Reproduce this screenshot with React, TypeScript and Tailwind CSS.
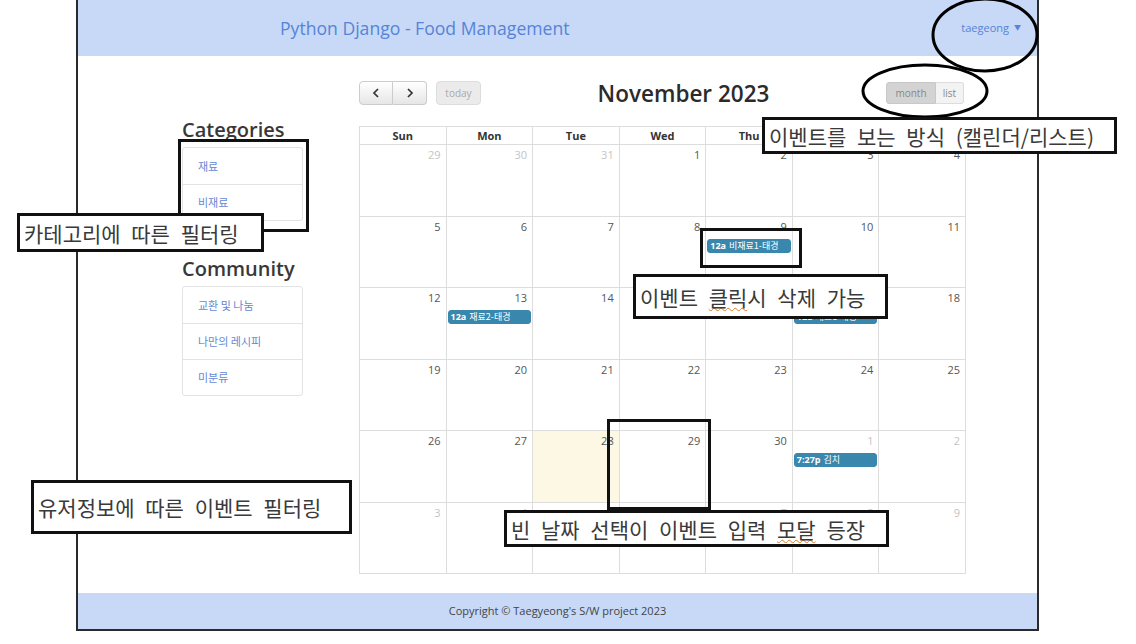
// App.tsx
import React from "react";

interface CalEvent {
  time: string;
  title: string;
}

interface Day {
  n: number;
  other?: boolean;
  today?: boolean;
  ev?: CalEvent;
}

const ko = { fontFamily: '"Noto Sans CJK KR", "Noto Sans", sans-serif' };
const sans = { fontFamily: '"Open Sans", "Noto Sans CJK KR", sans-serif' };

const buildDays = (): Day[] => {
  const days: Day[] = [{ n: 29, other: true }, { n: 30, other: true }, { n: 31, other: true }];
  for (let i = 1; i <= 30; i++) days.push({ n: i, today: i === 28 });
  for (let i = 1; i <= 9; i++) days.push({ n: i, other: true });
  days[3 + 8].ev = { time: "12a", title: "비재료1-태경" };
  days[3 + 12].ev = { time: "12a", title: "재료2-태경" };
  days[3 + 16].ev = { time: "12a", title: "재료1-태경" };
  days[33].ev = { time: "7:27p", title: "김치" };
  return days;
};

const Chevron = ({ dir }: { dir: "l" | "r" }) => (
  <svg width="8" height="10" viewBox="0 0 8 10">
    <polyline
      points={dir === "l" ? "6,1 2,5 6,9" : "2,1 6,5 2,9"}
      fill="none"
      stroke="#333"
      strokeWidth="1.7"
    />
  </svg>
);

const SideList = ({ title, items, mt }: { title: string; items: string[]; mt: string }) => (
  <div className={mt}>
    <h3 className="text-[20px] leading-[24px] font-semibold text-[#383838] mb-[5px]" style={sans}>
      {title}
    </h3>
    <div className="border border-[#e3e3e3] rounded-[3px]">
      {items.map((item, i) => (
        <div
          key={item}
          className={`h-[36px] flex items-center pl-[15px] text-[11px] text-[#6688d4] ${i > 0 ? "border-t border-[#e3e3e3]" : ""}`}
          style={ko}
        >
          {item}
        </div>
      ))}
    </div>
  </div>
);

const Calendar = () => {
  const days = buildDays();
  const names = ["Sun", "Mon", "Tue", "Wed", "Thu", "Fri", "Sat"];

  return (
    <div className="w-[607px] pt-[25px]" style={sans}>
      <div className="flex items-center h-[24px] mb-[21px]">
        <div className="flex items-center">
          <div className="flex">
            <button className="w-[34px] h-[24px] flex items-center justify-center border border-[#ccc] rounded-l-[4px] bg-linear-to-b from-white to-[#e6e6e6]">
              <Chevron dir="l" />
            </button>
            <button className="w-[34px] h-[24px] flex items-center justify-center border border-l-0 border-[#ccc] rounded-r-[4px] bg-linear-to-b from-white to-[#e6e6e6]">
              <Chevron dir="r" />
            </button>
          </div>
          <button className="ml-[9px] w-[45px] h-[24px] border border-[#ddd] rounded-[4px] bg-[#ebebeb] text-[10px] text-[#aaa]">
            today
          </button>
        </div>
        <h2 className="flex-1 text-center text-[22.5px] leading-[24px] font-semibold text-[#2b2b2b] pt-[2px]">
          November 2023
        </h2>
        <div className="flex mr-[2px]">
          <button className="w-[50px] h-[22px] border border-[#c8c8c8] rounded-l-[3px] bg-[#d3d3d3] text-[10px] text-[#888]">
            month
          </button>
          <button className="w-[28px] h-[22px] border border-l-0 border-[#ddd] rounded-r-[3px] bg-[#f3f3f3] text-[10px] text-[#888]">
            list
          </button>
        </div>
      </div>

      <div className="border-l border-t border-[#ddd]">
        <div className="grid grid-cols-7">
          {names.map((n) => (
            <div
              key={n}
              className="h-[18px] border-r border-b border-[#ddd] text-center text-[11px] leading-[17px] font-bold text-[#333]"
            >
              {n}
            </div>
          ))}
        </div>
        <div className="grid grid-cols-7">
          {days.map((d, i) => (
            <div
              key={i}
              className={`h-[71.5px] border-r border-b border-[#ddd] ${d.today ? "bg-[#fcf8e3]" : ""}`}
            >
              <div
                className={`text-right pr-[5px] pt-[3px] text-[11px] leading-[14px] ${d.other ? "text-[#c4c4c4]" : "text-[#555]"}`}
              >
                {d.n}
              </div>
              {d.ev && (
                <div
                  className="mx-[1px] mt-[5px] h-[14px] rounded-[3px] bg-[#3a87ad] border border-[#3a87ad] px-[2px] text-[9px] leading-[12px] text-white whitespace-nowrap overflow-hidden"
                  style={ko}
                >
                  <span className="font-bold mr-[3px]" style={sans}>
                    {d.ev.time}
                  </span>
                  {d.ev.title}
                </div>
              )}
            </div>
          ))}
        </div>
      </div>
    </div>
  );
};

const Label = ({ pos, children }: { pos: string; children: React.ReactNode }) => (
  <div
    className={`absolute ${pos} bg-white border-[3px] border-[#111] flex items-center pl-[4px] text-[21px] leading-[26px] text-[#3a3a3a] whitespace-nowrap [word-spacing:6px]`}
    style={ko}
  >
    <span>{children}</span>
  </div>
);

const Squiggle = ({ children }: { children: React.ReactNode }) => (
  <span className="underline decoration-wavy decoration-[#e07b20] decoration-1 underline-offset-[1px]">
    {children}
  </span>
);

const App: React.FC = () => {
  return (
    <div className="relative w-[1136px] h-[644px] overflow-hidden bg-white">
      <div className="ml-[76px] w-[963px] h-[631px] border-x-2 border-b-2 border-[#2a2a2a] flex flex-col">
        <header className="h-[56px] bg-[#c7d9f7] flex items-center pl-[202px] pr-[16px]" style={sans}>
          <h1 className="text-[17.6px] text-[#5684d6]">Python Django - Food Management</h1>
          <div className="ml-auto flex items-center text-[11px] text-[#5684d6]">
            taegeong
            <span className="ml-[5px] text-[7px]">▼</span>
          </div>
        </header>

        <main className="flex-1 flex">
          <aside className="ml-[104px] w-[121px] pt-[62px]">
            <SideList title="Categories" items={["재료", "비재료"]} mt="" />
            <SideList title="Community" items={["교환 및 나눔", "나만의 레시피", "미분류"]} mt="mt-[36px]" />
          </aside>
          <div className="ml-[56px]">
            <Calendar />
          </div>
        </main>

        <footer className="h-[36px] bg-[#c7d9f7] flex items-center justify-center text-[11px] text-[#444]" style={sans}>
          Copyright © Taegyeong's S/W project 2023
        </footer>
      </div>

      {/* annotation overlays */}
      <svg className="absolute left-[930px] top-[-4px]" width="110" height="80">
        <ellipse cx="55" cy="39" rx="52" ry="36" fill="none" stroke="#000" strokeWidth="3" />
      </svg>
      <svg className="absolute left-[860px] top-[63px]" width="130" height="56">
        <ellipse cx="65" cy="28" rx="62" ry="26" fill="none" stroke="#000" strokeWidth="3" />
      </svg>

      <div className="absolute left-[178px] top-[139px] w-[131px] h-[93px] border-[3px] border-[#111]" />
      <div className="absolute left-[700px] top-[228px] w-[102px] h-[40px] border-[3px] border-[#111]" />
      <div className="absolute left-[607px] top-[419px] w-[104px] h-[91px] border-[3px] border-[#111]" />

      <Label pos="left-[17px] top-[213px] w-[247px] h-[39px]">카테고리에 따른 필터링</Label>
      <Label pos="left-[762px] top-[117px] w-[355px] h-[37px]">이벤트를 보는 방식 (캘린더/리스트)</Label>
      <Label pos="left-[633px] top-[274px] w-[255px] h-[45px]">
        이벤트 <Squiggle>클릭</Squiggle>시 삭제 가능
      </Label>
      <Label pos="left-[504px] top-[510px] w-[385px] h-[37px]">
        빈 날짜 선택이 이벤트 입력 <Squiggle>모달</Squiggle> 등장
      </Label>
      <Label pos="left-[31px] top-[480px] w-[321px] h-[54px]">유저정보에 따른 이벤트 필터링</Label>
    </div>
  );
};

export default App;
